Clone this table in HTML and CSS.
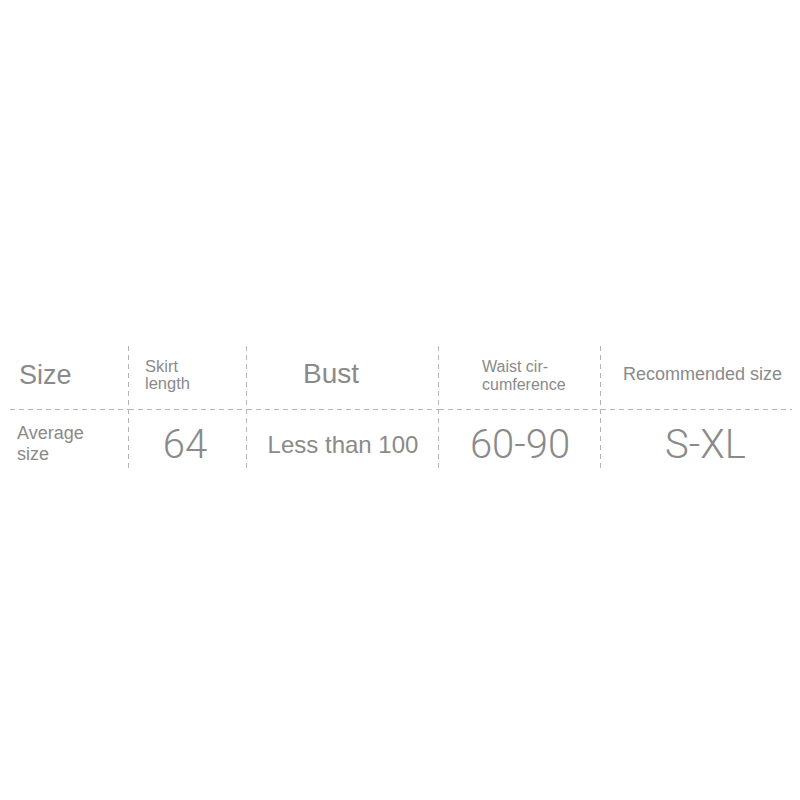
FILE: index.html
```html
<!DOCTYPE html>
<html>
<head>
<meta charset="utf-8">
<link rel="stylesheet" href="styles.css">
</head>
<body>
<div class="sheet">
  <div class="table">
    <div class="cell head c1"><span class="size-label">Size</span></div>
    <div class="cell head c2"><span class="small-2">Skirt<br>length</span></div>
    <div class="cell head c3"><span class="bust">Bust</span></div>
    <div class="cell head c4"><span class="waist">Waist cir-<br>cumference</span></div>
    <div class="cell head c5"><span class="rec">Recommended size</span></div>
    <div class="cell body-row c1"><span class="avg">Average<br>size</span></div>
    <div class="cell body-row c2 center"><span class="big b64">64</span></div>
    <div class="cell body-row c3 center"><span class="mid">Less than 100</span></div>
    <div class="cell body-row c4 center"><span class="big">60-90</span></div>
    <div class="cell body-row c5 center"><span class="big bsxl">S-XL</span></div>
  </div>
</div>
</body>
</html>
```

FILE: styles.css
```css
html, body {
  margin: 0;
  padding: 0;
  background: #ffffff;
}

body {
  font-family: "Liberation Sans", Arial, sans-serif;
  color: #8a8a8a;
}

.sheet {
  width: 800px;
  height: 800px;
  padding: 346px 10px 0 10px;
  box-sizing: border-box;
}

.table {
  display: grid;
  grid-template-columns: 119px 118px 192px 162px 189px;
  grid-template-rows: 63px 61px;
}

.cell {
  display: flex;
  align-items: center;
  box-sizing: border-box;
  position: relative;
}

.c1, .c2, .c3, .c4 {
  background-image: linear-gradient(to bottom, #b4b4b4 0 5px, transparent 5px 9px);
  background-size: 1px 9px;
  background-repeat: repeat-y;
  background-position: right top;
}

.head::after {
  content: "";
  position: absolute;
  left: 0;
  right: 0;
  bottom: -1px;
  height: 1px;
  background-image: linear-gradient(to right, #b4b4b4 0 5px, transparent 5px 9px);
  background-size: 9px 1px;
  background-repeat: repeat-x;
}

.head.c5::after {
  right: -2px;
}

.center {
  justify-content: center;
}

.size-label {
  font-size: 27px;
  padding-left: 9px;
  margin-top: -4px;
}

.small-2 {
  font-size: 16.5px;
  line-height: 17px;
  padding-left: 16px;
  margin-top: -6px;
}

.bust {
  font-size: 28px;
  padding-left: 56px;
  margin-top: -8px;
}

.waist {
  font-size: 16px;
  line-height: 18px;
  padding-left: 43px;
  margin-top: -4px;
}

.rec {
  font-size: 18px;
  padding-left: 22px;
  margin-top: -6px;
}

.avg {
  font-size: 18px;
  line-height: 21px;
  padding-left: 7px;
  margin-top: 8px;
}

.big {
  font-family: Roboto, "Liberation Sans", sans-serif;
  font-weight: 300;
  font-size: 40px;
  margin-top: 10px;
}

.b64 {
  margin-right: 6px;
}

.bsxl {
  margin-left: 20px;
}

.mid {
  font-size: 24px;
  margin-top: 10px;
}
```
